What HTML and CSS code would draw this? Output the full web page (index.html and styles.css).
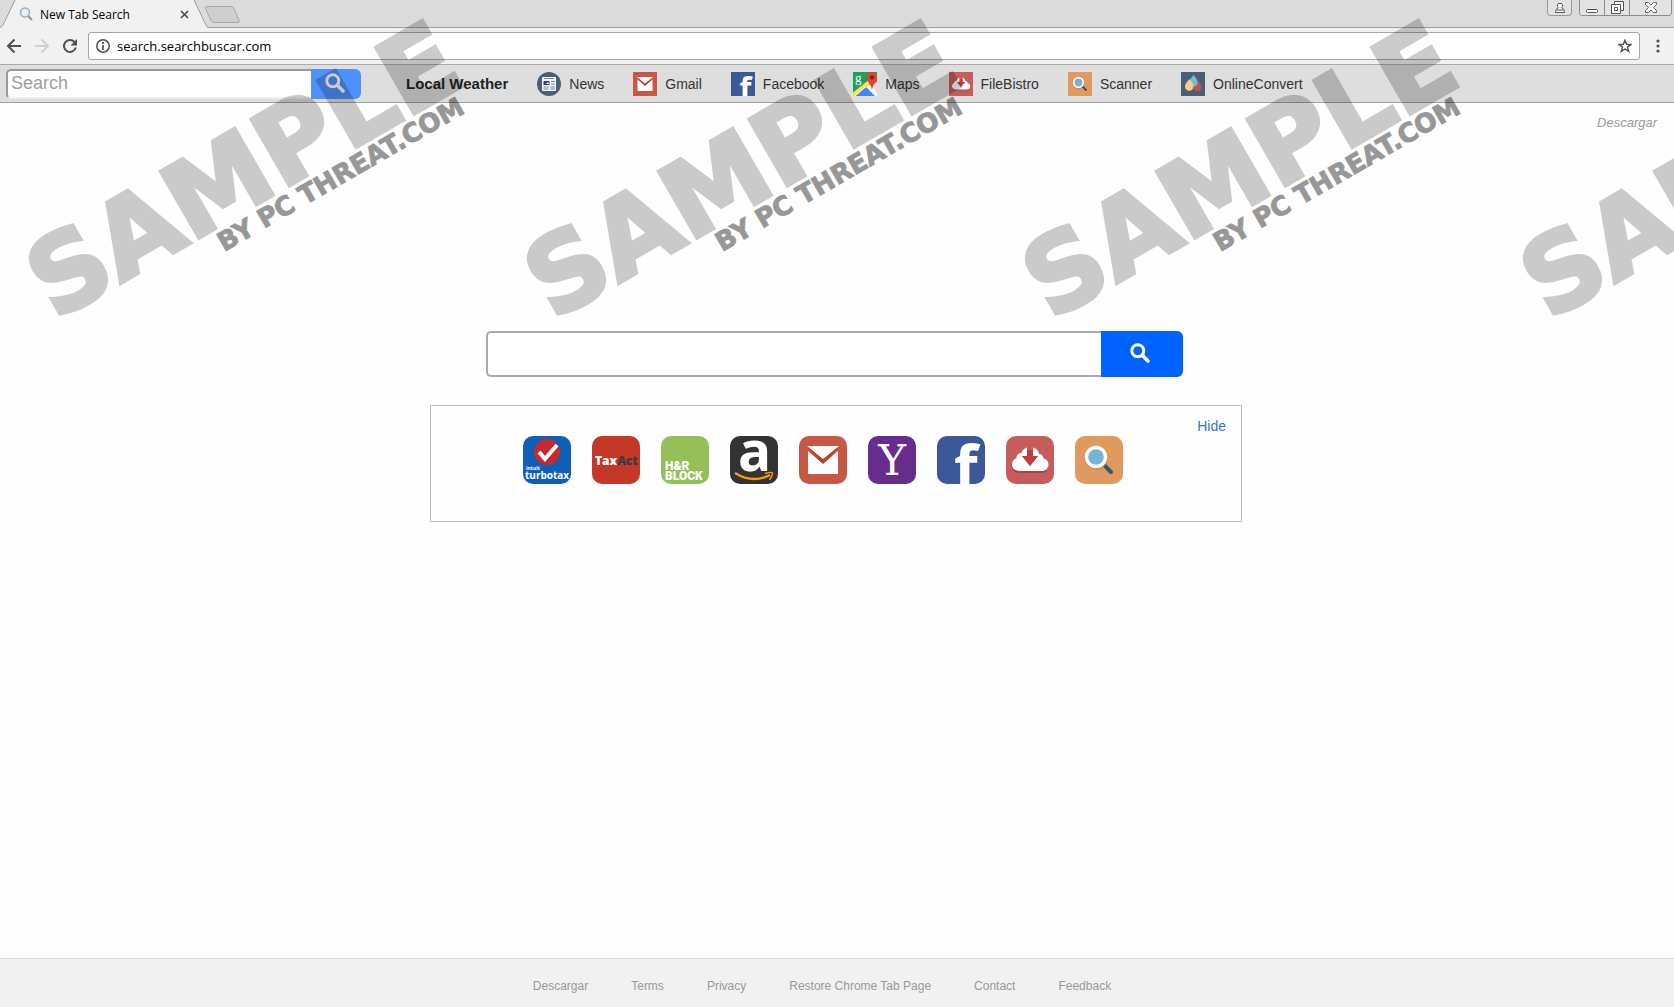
FILE: index.html
```html
<!DOCTYPE html>
<html lang="en">
<head>
    <meta charset="UTF-8">
    <meta name="viewport" content="width=device-width, initial-scale=1.0">
    <title>New Tab Search</title>
    <link rel="stylesheet" href="styles.css">
</head>
<body>
    <!-- Shared icons -->
    <svg class="sprite" aria-hidden="true">
        <symbol id="icon-search" viewBox="0 0 20 20">
            <circle cx="7.8" cy="7.8" r="6" fill="none" stroke="#fff" stroke-width="3"/>
            <path d="M12.5 12.5L18 18" stroke="#fff" stroke-width="3.6" stroke-linecap="round"/>
        </symbol>
        <symbol id="icon-gmail" viewBox="0 0 48 48">
            <path fill="#c65844" d="M0 0h48v48H0z"/>
            <path fill="#b8412d" d="M9 12l15 17 15-17v-1H9z"/>
            <path fill="#fff" d="M8 10h32L24 23zM9 15l15 13 15-13V38H9z"/>
        </symbol>
        <symbol id="icon-facebook" viewBox="0 0 48 48">
            <path fill="#3b5998" d="M0 0h48v48H0z"/>
            <text class="logo-f" x="17" y="53">f</text>
        </symbol>
        <symbol id="icon-filebistro" viewBox="0 0 48 48">
            <path fill="#c75c5c" d="M0 0h48v48H0z"/>
            <path fill="#a94444" d="M14 37h21c5 0 7-3 7-7H6c0 4 3 7 8 7z"/>
            <path fill="#fff" d="M13.500 35C9 35 6 32 6 28.500c0-3.500 2-5.500 4.500-6.500 0-3 2-5 5-5 1-3 3.500-6 8.500-6s8.500 3 9 7c2.500 0 4.500 2 4.500 4.500 3 .5 5 3 5 6 0 4-3 6.500-7 6.500z"/>
            <path fill="#c75c5c" d="M21 9h6v11h5l-8 10-8-10h5z"/>
            <path fill="#c03d3d" d="M21 14h6v6h5l-8 10-8-10h5z"/>
        </symbol>
        <symbol id="icon-scanner" viewBox="0 0 48 48">
            <path fill="#e0995e" d="M0 0h48v48H0z"/>
            <path stroke="#3d5470" stroke-width="4" stroke-linecap="round" d="M29 29l7 7"/>
            <circle cx="21" cy="22" r="11.500" fill="#c9854c"/>
            <circle cx="21" cy="21" r="9.500" fill="#76b3d8" stroke="#fff" stroke-width="3.400"/>
        </symbol>
    </svg>

    <!-- Browser window -->
    <header class="browser">
        <div class="tab-strip">
            <div class="tab">
                <svg class="tab-shape" width="208" height="28" viewBox="0 0 208 28" aria-hidden="true">
                    <path d="M0 28L2 26 15 0H194L206 26l2 2z" fill="#f1f1f1"/>
                    <path d="M0 27.500Q2 27 3 25L15 0M194 0l12 25q1 2.500 3 2.500" fill="none" stroke="#9c9c9c"/>
                </svg>
                <div class="tab-content">
                    <svg width="14" height="14" viewBox="0 0 14 14" aria-hidden="true">
                        <circle cx="6" cy="5.500" r="4.500" fill="#e6eff5" stroke="#9aafc1" stroke-width="1.500"/>
                        <path d="M9 9l4 4" stroke="#8a95a0" stroke-width="2"/>
                    </svg>
                    <span class="tab-title">New Tab Search</span>
                    <button class="icon-btn" type="button" aria-label="Close tab">
                        <svg width="9" height="9" viewBox="0 0 9 9"><path d="M1 1l7 7M8 1L1 8" stroke="#4a4a4a" stroke-width="1.600"/></svg>
                    </button>
                </div>
            </div>
            <button class="icon-btn new-tab" type="button" aria-label="New tab">
                <svg width="35" height="18" viewBox="0 0 35 18"><path d="M2 .5h24q2 0 3 2l5 12q1 2-1 2H9q-2 0-3-2L.5 2.500Q0 .5 2 .5z" fill="#cfcfcf" stroke="#a8a8a8"/></svg>
            </button>
            <div class="window-controls">
                <button class="window-btn profile" type="button" aria-label="Profile">
                    <svg width="12" height="12" viewBox="0 0 12 12"><path d="M6 1.500a2.200 2.200 0 0 1 1.500 4.100q3 .6 3 4.900h-9q0-4.300 3-4.900A2.200 2.200 0 0 1 6 1.500zM3 8h6" fill="#f5f5f5" stroke="#555"/></svg>
                </button>
                <div class="window-group">
                    <button class="window-btn" type="button" aria-label="Minimize">
                        <svg width="13" height="12" viewBox="0 0 13 12"><rect x=".5" y="7.500" width="11" height="3" rx="1" fill="#fff" stroke="#555"/></svg>
                    </button>
                    <button class="window-btn" type="button" aria-label="Restore">
                        <svg width="13" height="13" viewBox="0 0 13 13"><path d="M3.500 .5h9v9h-3v3h-9v-9h3z" fill="#fff" stroke="#555"/><path d="M3.500 3.500h6v6M3.500 6.500h3v3h-3z" fill="none" stroke="#555"/></svg>
                    </button>
                    <button class="window-btn close" type="button" aria-label="Close">
                        <svg width="12" height="11" viewBox="0 0 12 11"><path d="M.5 .5h3L6 3 8.500 .5h3v2L8.500 5.500l3 3v2h-3L6 8l-2.500 2.500h-3v-2l3-3-3-3z" fill="#fff" stroke="#666"/></svg>
                    </button>
                </div>
            </div>
        </div>

        <div class="toolbar">
            <button class="icon-btn" type="button" aria-label="Back">
                <svg width="16" height="16" viewBox="0 0 16 16"><path d="M15 8H2M8.500 1.500L2 8l6.500 6.500" fill="none" stroke="#505050" stroke-width="2"/></svg>
            </button>
            <button class="icon-btn" type="button" aria-label="Forward">
                <svg width="16" height="16" viewBox="0 0 16 16"><path d="M1 8h13M7.500 1.500L14 8l-6.500 6.500" fill="none" stroke="#d0d0d0" stroke-width="2"/></svg>
            </button>
            <button class="icon-btn" type="button" aria-label="Reload">
                <svg width="16" height="16" viewBox="0 0 16 16"><path d="M12.500 4A6 6 0 1 0 13.800 9.500" fill="none" stroke="#505050" stroke-width="2"/><path d="M15 1v6.500H8.500z" fill="#505050"/></svg>
            </button>
            <div class="address-bar">
                <svg width="14" height="14" viewBox="0 0 14 14" aria-hidden="true"><circle cx="7" cy="7" r="6.200" fill="none" stroke="#505050" stroke-width="1.500"/><path d="M7 6v5M7 3v2" stroke="#505050" stroke-width="1.700"/></svg>
                <input type="text" class="address-input" aria-label="Address" value="search.searchbuscar.com">
                <button class="icon-btn" type="button" aria-label="Bookmark">
                    <svg width="14" height="14" viewBox="0 0 14 14"><path d="M7 1.200l1.600 4 4.300.2-3.400 2.700 1.200 4.300L7 10l-3.700 2.400 1.200-4.300L1.100 5.400l4.300-.2z" fill="none" stroke="#505050" stroke-width="1.400"/></svg>
                </button>
            </div>
            <button class="icon-btn menu-btn" type="button" aria-label="Menu">
                <svg width="4" height="14" viewBox="0 0 4 14"><circle cx="2" cy="2" r="1.600" fill="#505050"/><circle cx="2" cy="7" r="1.600" fill="#505050"/><circle cx="2" cy="12" r="1.600" fill="#505050"/></svg>
            </button>
        </div>
    </header>

    <!-- Quick links bar -->
    <div class="top-bar">
        <form class="top-search">
            <input type="text" placeholder="Search" aria-label="Search">
            <button type="submit" aria-label="Search"><svg width="20" height="20"><use href="#icon-search"/></svg></button>
        </form>
        <nav class="quick-links">
            <a href="#" class="weather">Local Weather</a>
            <a href="#">
                <svg width="24" height="24" viewBox="0 0 24 24"><circle cx="12" cy="12" r="12" fill="#4c5d76"/><rect x="5" y="5" width="14" height="14" rx="1" fill="#f2f5f8"/><path d="M7 6.500h10M14 9.500h4M14 12h4M6.500 15h5M6.500 17h5M13.500 15h4.500M13.500 17h4.500" stroke="#77859a"/><path d="M6.500 9h6v4h-6z" fill="#33455f"/><path d="M9 12l2-2 1 2z" fill="#fff"/></svg>
                News
            </a>
            <a href="#"><svg width="24" height="24"><use href="#icon-gmail"/></svg>Gmail</a>
            <a href="#"><svg width="24" height="24"><use href="#icon-facebook"/></svg>Facebook</a>
            <a href="#">
                <svg width="24" height="24" viewBox="0 0 24 24"><path fill="#1fa05a" d="M0 0h24v24H0z"/><path fill="#ddd" d="M24 10v14L12 14z"/><path fill="#fff" d="M16 12l8 9v3h-3l-8-9z"/><path fill="#ffe14d" d="M0 20.500L17 7v5L4 24H0z"/><path fill="#3f87f5" d="M2 24l11-9 9 9z"/><path d="M2 24L13 14.500" stroke="#fff"/><text class="logo-maps" x="2" y="10">g</text><path fill="#dd4436" d="M19 0a5.500 5.500 0 0 1 5.500 5.500C24.500 10 20 11 19 18c-1-7-5.500-8-5.500-12.500A5.500 5.500 0 0 1 19 0z"/><circle cx="19" cy="5.500" r="2" fill="#7d2119"/></svg>
                Maps
            </a>
            <a href="#"><svg width="24" height="24"><use href="#icon-filebistro"/></svg>FileBistro</a>
            <a href="#"><svg width="24" height="24"><use href="#icon-scanner"/></svg>Scanner</a>
            <a href="#">
                <svg width="24" height="24" viewBox="0 0 24 24"><path fill="#4c5d76" d="M0 0h24v24H0z"/><path fill="#c94f4f" d="M16 8q4.500 4 4.500 7a4 4 0 0 1-8 0Q12.500 12 16 8z"/><path fill="#76b9de" d="M12.500 3q4 4 4 7.500a4 4 0 0 1-8 0Q8.500 7 12.500 3z"/><path fill="#f5cf87" d="M8.500 7q4 4.500 4 7.500a4.200 4.200 0 0 1-8.500 0Q4 11.500 8.500 7z"/></svg>
                OnlineConvert
            </a>
        </nav>
    </div>

    <main class="content">
        <a href="#" class="download-link">Descargar</a>

        <form class="main-search">
            <input type="text" aria-label="Search the web">
            <button type="submit" aria-label="Search the web"><svg width="20" height="20"><use href="#icon-search"/></svg></button>
        </form>

        <section class="shortcuts">
            <div class="tiles">
                <a href="#" class="tile" aria-label="TurboTax">
                    <svg width="48" height="48" viewBox="0 0 48 48"><path fill="#0f5eb8" d="M0 0h48v48H0z"/><circle cx="24" cy="16" r="13" fill="#c52b2e"/><path d="M16 16l6 7L34 9" fill="none" stroke="#fff" stroke-width="4"/><text class="logo-intuit" x="3" y="34">intuit</text><text class="logo-turbo" x="2" y="43">turbotax</text></svg>
                </a>
                <a href="#" class="tile" aria-label="TaxAct">
                    <svg width="48" height="48" viewBox="0 0 48 48"><path fill="#c43827" d="M0 0h48v48H0z"/><text class="logo-taxact" x="3" y="29">Tax<tspan fill="#3b3b43">Act</tspan></text></svg>
                </a>
                <a href="#" class="tile" aria-label="H&amp;R Block">
                    <svg width="48" height="48" viewBox="0 0 48 48"><path fill="#95bf59" d="M0 0h48v48H0z"/><text class="logo-block" x="4" y="34">H&amp;R</text><text class="logo-block" x="4" y="44">BLOCK</text></svg>
                </a>
                <a href="#" class="tile" aria-label="Amazon">
                    <svg width="48" height="48" viewBox="0 0 48 48"><path fill="#333" d="M0 0h48v48H0z"/><text class="logo-amazon" x="8" y="35">a</text><path d="M5 37q18 11 35 2" fill="none" stroke="#f90" stroke-width="2.400"/><path d="M35 37.500q7-2 7.500-.5t-3 7" fill="none" stroke="#f90" stroke-width="1.500"/></svg>
                </a>
                <a href="#" class="tile" aria-label="Gmail"><svg width="48" height="48"><use href="#icon-gmail"/></svg></a>
                <a href="#" class="tile" aria-label="Yahoo">
                    <svg width="48" height="48" viewBox="0 0 48 48"><path fill="#662d8c" d="M0 0h48v48H0z"/><text class="logo-yahoo" x="24" y="39">Y</text></svg>
                </a>
                <a href="#" class="tile" aria-label="Facebook"><svg width="48" height="48"><use href="#icon-facebook"/></svg></a>
                <a href="#" class="tile" aria-label="FileBistro"><svg width="48" height="48"><use href="#icon-filebistro"/></svg></a>
                <a href="#" class="tile" aria-label="Scanner"><svg width="48" height="48"><use href="#icon-scanner"/></svg></a>
            </div>
            <a href="#" class="hide-link">Hide</a>
        </section>
    </main>

    <footer class="footer">
        <a href="#">Descargar</a>
        <a href="#">Terms</a>
        <a href="#">Privacy</a>
        <a href="#">Restore Chrome Tab Page</a>
        <a href="#">Contact</a>
        <a href="#">Feedback</a>
    </footer>

    <!-- Repeated watermark -->
    <div class="watermark">
        <svg width="498" height="330" viewBox="0 0 498 330">
            <text class="mark-big" transform="translate(55 321) rotate(-30)">SAMPLE</text>
            <text class="mark-small" transform="translate(224 252) rotate(-30)">BY PC THREAT.COM</text>
        </svg>
        <svg width="498" height="330" viewBox="0 0 498 330">
            <text class="mark-big" transform="translate(55 321) rotate(-30)">SAMPLE</text>
            <text class="mark-small" transform="translate(224 252) rotate(-30)">BY PC THREAT.COM</text>
        </svg>
        <svg width="498" height="330" viewBox="0 0 498 330">
            <text class="mark-big" transform="translate(55 321) rotate(-30)">SAMPLE</text>
            <text class="mark-small" transform="translate(224 252) rotate(-30)">BY PC THREAT.COM</text>
        </svg>
        <svg width="498" height="330" viewBox="0 0 498 330">
            <text class="mark-big" transform="translate(55 321) rotate(-30)">SAMPLE</text>
        </svg>
    </div>
</body>
</html>
```

FILE: styles.css
```css
* {
    margin: 0;
    padding: 0;
    box-sizing: border-box;
}

body {
    min-height: 100vh;
    display: flex;
    flex-direction: column;
    position: relative;
    background-color: #fefefe;
    font-family: 'Liberation Sans', Arial, sans-serif;
    font-size: 14px;
    color: #333;
}

a {
    color: inherit;
    text-decoration: none;
}

svg {
    display: block;
    flex-shrink: 0;
}

input {
    min-width: 0;
    outline: none;
}

.sprite {
    position: absolute;
    width: 0;
    height: 0;
}

/* Browser window */
.browser {
    font-family: 'Open Sans', 'Noto Sans', sans-serif;
    color: #000;
}

.icon-btn {
    display: flex;
    background: none;
    border: none;
    cursor: pointer;
}

.tab-strip {
    display: flex;
    height: 28px;
    background-color: #dbdbdb;
    border-bottom: 1px solid #a0a0a0;
}

.tab {
    display: grid;
    height: 28px;
}

.tab-shape,
.tab-content {
    grid-area: 1 / 1;
}

.tab-content {
    display: flex;
    align-items: center;
    padding: 0 19px;
}

.tab-title {
    flex: 1;
    margin-left: 7px;
    font-size: 12px;
}

.new-tab {
    margin: 6px 0 0 -3px;
}

.window-controls {
    display: flex;
    gap: 7px;
    height: 16px;
    margin-left: auto;
    padding-right: 2px;
}

.window-btn {
    display: flex;
    justify-content: center;
    align-items: center;
    width: 25px;
    background-color: #e3e3e3;
    border: none;
    border-right: 1px solid #8c8c8c;
}

.window-btn.profile {
    border: 1px solid #999;
    border-top: none;
    border-radius: 0 0 4px 4px;
}

.window-btn.close {
    width: 41px;
    border-right: none;
}

.window-group {
    display: flex;
    border: 1px solid #8c8c8c;
    border-top: none;
    border-radius: 0 0 4px 4px;
    overflow: hidden;
}

.toolbar {
    display: flex;
    align-items: center;
    gap: 12px;
    height: 37px;
    padding: 0 14px 0 6px;
    background-color: #f1f1f1;
    border-bottom: 1px solid #aaa;
}

.address-bar {
    flex: 1;
    display: flex;
    align-items: center;
    height: 28px;
    margin-left: -2px;
    padding: 0 7px;
    background: white;
    border: 1px solid #a6a6a6;
    border-radius: 3px;
}

.address-input {
    flex: 1;
    margin-left: 7px;
    border: none;
    font-family: inherit;
    font-size: 13px;
}

.menu-btn {
    margin-left: 4px;
}

/* Quick links bar */
.top-bar {
    display: flex;
    align-items: center;
    gap: 45px;
    height: 38px;
    padding-left: 6px;
    background-color: #dedede;
    border-bottom: 1px solid #a0a0a0;
}

.top-search {
    display: flex;
    width: 355px;
    height: 30px;
}

.top-search input {
    flex: 1;
    padding: 0 3px;
    background: white;
    border: 2px solid #999;
    border-right: none;
    border-bottom-color: #eee;
    border-radius: 5px 0 0 5px;
    font-family: inherit;
    font-size: 18px;
}

.top-search input::placeholder {
    color: #a0a0a0;
}

.top-search button,
.main-search button {
    display: flex;
    justify-content: center;
    align-items: center;
    border: none;
    cursor: pointer;
}

.top-search button {
    width: 50px;
    padding: 0 2px 2px 0;
    background-color: #4f90ff;
    border-radius: 0 6px 6px 0;
}

.quick-links {
    display: flex;
    align-items: center;
    gap: 29px;
}

.quick-links a {
    display: flex;
    align-items: center;
    gap: 8px;
}

.quick-links .weather {
    color: #222;
    font-size: 15px;
    font-weight: bold;
}

/* Page */
.content {
    flex: 1;
    display: flex;
    flex-direction: column;
    align-items: center;
}

.download-link {
    align-self: flex-end;
    margin: 12px 17px 0 0;
    color: #999;
    font-size: 13px;
    line-height: 16px;
    font-style: italic;
}

.main-search {
    display: flex;
    width: 90%;
    max-width: 697px;
    height: 46px;
    margin: 200px 5px 28px 0;
}

.main-search input {
    flex: 1;
    padding: 0 10px;
    background: white;
    border: 2px solid #aaa;
    border-right: none;
    border-radius: 5px 0 0 5px;
    font-size: 18px;
}

.main-search button {
    width: 82px;
    padding: 0 4px 2px 0;
    background-color: #0062ff;
    border-radius: 0 6px 6px 0;
}

.shortcuts {
    display: flex;
    align-items: flex-start;
    width: 95%;
    max-width: 812px;
    margin-right: 2px;
    padding: 12px 15px 37px 18px;
    border: 1px solid #bbb;
}

.tiles {
    flex: 1;
    display: flex;
    justify-content: center;
    gap: 21px;
    padding-top: 18px;
}

.tile {
    border-radius: 10px;
    overflow: hidden;
}

.hide-link {
    color: #337ab7;
    line-height: 16px;
}

/* Lettering inside the logos */
.logo-f {
    fill: #fff;
    font: bold 61px 'Open Sans', sans-serif;
}

.logo-maps {
    fill: #fff;
    font: 13px 'Liberation Serif', serif;
}

.logo-intuit {
    fill: #fff;
    font: bold 5px 'Open Sans', sans-serif;
}

.logo-turbo {
    fill: #fff;
    font: bold 10px 'Open Sans', sans-serif;
}

.logo-taxact {
    fill: #fff;
    font: 800 12px 'Open Sans', sans-serif;
}

.logo-block {
    fill: #fff;
    font: 900 12px Roboto, sans-serif;
}

.logo-amazon {
    fill: #fff;
    font: bold 55px 'Open Sans', sans-serif;
}

.logo-yahoo {
    fill: #fff;
    font: 42px 'DejaVu Serif', serif;
    text-anchor: middle;
}

.footer {
    display: flex;
    justify-content: center;
    align-items: center;
    gap: 43px;
    height: 49px;
    padding: 6px 30px 0 0;
    background-color: #f1f1f1;
    border-top: 1px solid #ddd;
    color: #999;
    font-size: 12px;
}

/* Watermark */
.watermark {
    position: absolute;
    top: 0;
    left: 0;
    display: flex;
    width: 100%;
    overflow: hidden;
    pointer-events: none;
}

.mark-big {
    fill: #000;
    stroke: #000;
    stroke-width: 4px;
    font: bold 105px 'DejaVu Sans', sans-serif;
    opacity: 0.2;
}

.mark-small {
    fill: #000;
    stroke: #000;
    stroke-width: 1px;
    font: bold 26px 'DejaVu Sans', sans-serif;
    opacity: 0.4;
}
```
